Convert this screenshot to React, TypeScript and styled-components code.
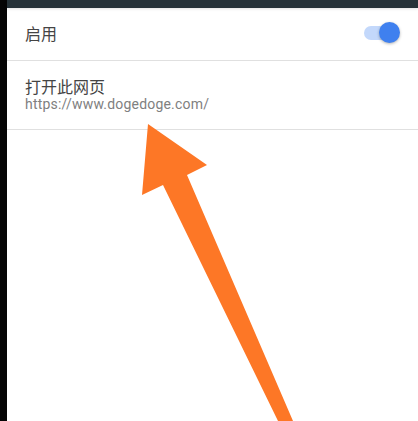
import * as React from 'react'
import styled, { createGlobalStyle } from 'styled-components'

const GlobalStyle = createGlobalStyle`
  html, body {
    margin: 0;
    padding: 0;
    background: #ffffff;
  }
  body {
    font-family: Roboto, 'Noto Sans CJK SC', sans-serif;
  }
`

const Frame = styled.div`
  position: relative;
  width: 418px;
  height: 421px;
  overflow: hidden;
  display: flex;
  background: #ffffff;
`

const SideEdge = styled.div`
  width: 7px;
  flex-shrink: 0;
  background: #050505;
`

const Page = styled.div`
  flex: 1;
  display: flex;
  flex-direction: column;
`

const TopBar = styled.div`
  height: 8px;
  background: #263238;
  box-shadow: 0 1px 3px rgba(0, 0, 0, 0.12);
`

const Row = styled.div<{ $height: number; $lift?: number }>`
  height: ${(p) => p.$height}px;
  box-sizing: border-box;
  display: flex;
  align-items: center;
  justify-content: space-between;
  padding: 0 20px ${(p) => p.$lift ?? 0}px 18px;
  border-bottom: 1px solid #e0e0e0;
`

const TextBlock = styled.div`
  display: flex;
  flex-direction: column;
`

const Title = styled.span`
  font-family: 'Noto Sans CJK SC', Roboto, sans-serif;
  font-size: 16px;
  line-height: 20px;
  color: #444444;
`

const Subtitle = styled.span`
  font-family: Roboto, 'Noto Sans CJK SC', sans-serif;
  font-size: 14px;
  line-height: 16px;
  color: #808080;
  letter-spacing: 0.2px;
`

const SwitchTrack = styled.div`
  position: relative;
  width: 34px;
  height: 14px;
  border-radius: 7px;
  background: #c3d8fb;
`

const SwitchThumb = styled.div`
  position: absolute;
  right: -2px;
  top: -4px;
  width: 21px;
  height: 21px;
  border-radius: 50%;
  background: #3f80ef;
  box-shadow: 0 1px 3px rgba(0, 0, 0, 0.3);
`

const Arrow = styled.svg`
  position: absolute;
  left: 0;
  top: 0;
  pointer-events: none;
`

export default function App() {
  return (
    <>
      <GlobalStyle />
      <Frame>
        <SideEdge />
        <Page>
          <TopBar />
          <Row $height={53} $lift={3}>
            <Title>启用</Title>
            <SwitchTrack>
              <SwitchThumb />
            </SwitchTrack>
          </Row>
          <Row $height={69} $lift={2}>
            <TextBlock>
              <Title>打开此网页</Title>
              <Subtitle>https://www.dogedoge.com/</Subtitle>
            </TextBlock>
          </Row>
        </Page>
        <Arrow width="418" height="421" viewBox="0 0 418 421">
          <polygon
            points="148,124 207,165 187,175 293,421 278,421 163,185 142,195"
            fill="#fd7726"
          />
        </Arrow>
      </Frame>
    </>
  )
}
